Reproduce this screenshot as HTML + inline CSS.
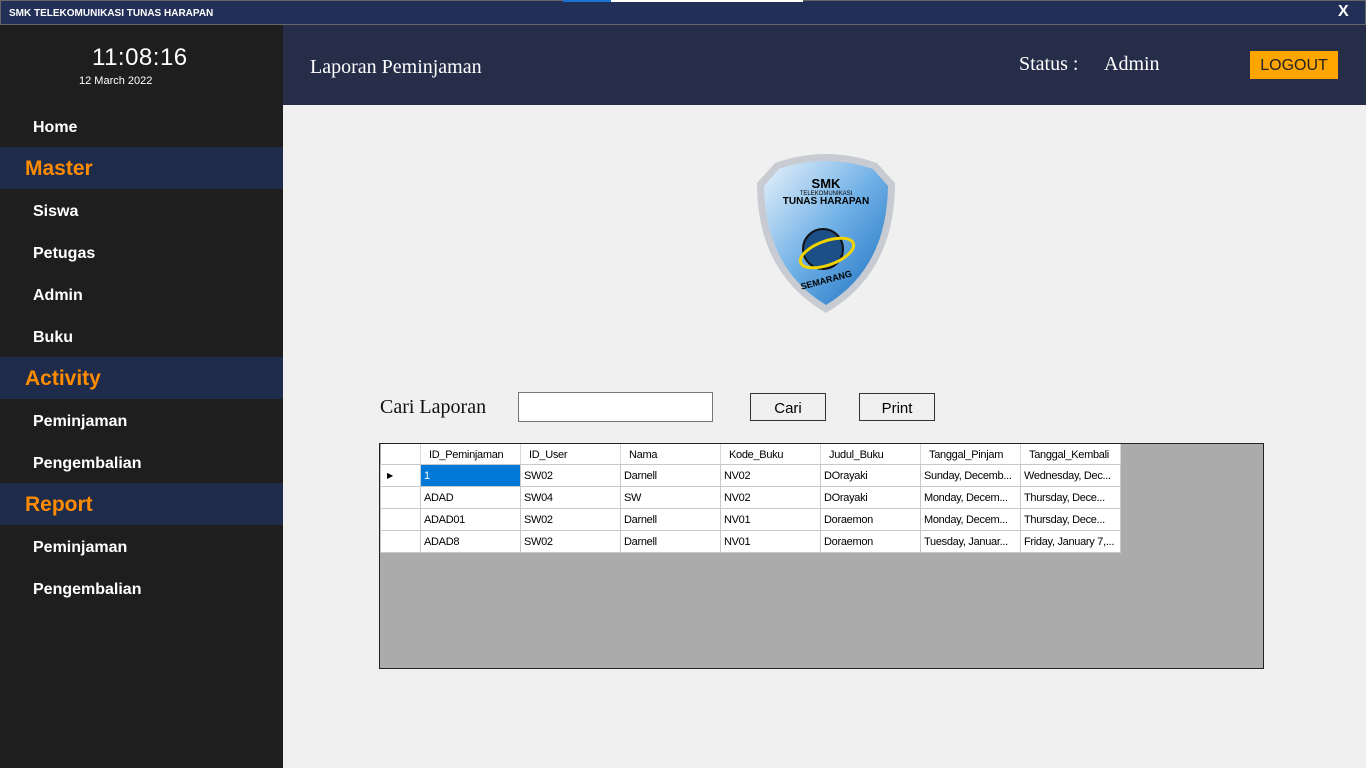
<!DOCTYPE html><html><head><style>
*{margin:0;padding:0;box-sizing:border-box}
body{width:1366px;height:768px;background:#f0f0f0;position:relative;overflow:hidden;font-family:"Liberation Sans",sans-serif}
.a{position:absolute}
#tb{left:0;top:0;width:1366px;height:25px;background:#223058;border:1px solid #666;color:#fff;font-size:10px;font-weight:bold;padding:7px 0 0 8px}
#sb{left:0;top:25px;width:283px;height:743px;background:#1e1e1e}
.it{position:absolute;left:33px;color:#fff;font-size:16px;font-weight:bold;margin-top:2px}
.bd{position:absolute;left:0;width:283px;height:42px;background:#1f2b4a;color:#ff8c00;font-size:21px;font-weight:bold;padding:10px 0 0 25px}
#hd{left:283px;top:25px;width:1083px;height:80px;background:#252d48;color:#fff;font-family:"Liberation Serif",serif}
table{border-collapse:collapse;font-size:11px;letter-spacing:-0.3px}
td{height:22px;border:1px solid #c8c8c8;background:#fff;padding:2px 3px 0;width:100px;white-space:nowrap;overflow:hidden}
th{height:20px;font-weight:normal;border-right:1px solid #d8d8d8;border-bottom:1px solid #c8c8c8;background:#fff;text-align:left;padding:2px 0 0 8px;width:100px}
.rh{width:40px;padding:0}
</style></head><body>
<div class="a" id="tb">SMK TELEKOMUNIKASI TUNAS HARAPAN</div>
<div class="a" style="left:563px;top:0;width:48px;height:2px;background:#1a73d0"></div>
<div class="a" style="left:611px;top:0;width:192px;height:2px;background:#fff"></div>
<div class="a" style="left:1338px;top:3px;color:#fff;font-size:16px;font-weight:bold">X</div>
<div class="a" id="sb">
<div class="a" style="left:92px;top:19px;color:#fff;font-size:24px;font-family:'Liberation Sans',sans-serif;letter-spacing:0.5px">11:08:16</div>
<div class="a" style="left:79px;top:50px;color:#fff;font-size:11px">12 March 2022</div>
<div class="it" style="top:92px">Home</div>
<div class="bd" style="top:122px">Master</div>
<div class="it" style="top:176px">Siswa</div>
<div class="it" style="top:218px">Petugas</div>
<div class="it" style="top:260px">Admin</div>
<div class="it" style="top:302px">Buku</div>
<div class="bd" style="top:332px">Activity</div>
<div class="it" style="top:386px">Peminjaman</div>
<div class="it" style="top:428px">Pengembalian</div>
<div class="bd" style="top:458px">Report</div>
<div class="it" style="top:512px">Peminjaman</div>
<div class="it" style="top:554px">Pengembalian</div>
</div>
<div class="a" id="hd">
<div class="a" style="left:27px;top:31px;font-size:20px">Laporan Peminjaman</div>
<div class="a" style="left:736px;top:28px;font-size:20px">Status :</div>
<div class="a" style="left:821px;top:28px;font-size:20px">Admin</div>
<div class="a" style="left:967px;top:26px;width:88px;height:28px;background:#ffa500;color:#222;font-family:'Liberation Sans',sans-serif;font-size:16px;text-align:center;line-height:30px">LOGOUT</div>
</div>
<svg class="a" style="left:755px;top:153px" width="142" height="162" viewBox="0 0 142 162">
<defs><linearGradient id="g" x1="0" y1="0" x2="1" y2="1"><stop offset="0" stop-color="#e8f2fb"/><stop offset=".5" stop-color="#6fb0e6"/><stop offset="1" stop-color="#1a6fc0"/></linearGradient></defs>
<path d="M20 10 Q71 -8 122 10 L140 30 Q140 120 71 160 Q2 120 2 30 Z" fill="#c8ccd2"/>
<path d="M24 16 Q71 0 118 16 L133 33 Q132 115 71 152 Q10 115 9 33 Z" fill="url(#g)"/>
<text x="71" y="35" font-size="13" font-weight="bold" text-anchor="middle" font-family="Liberation Sans">SMK</text>
<text x="71" y="42" font-size="6" text-anchor="middle" font-family="Liberation Sans">TELEKOMUNIKASI</text>
<text x="71" y="51" font-size="10" font-weight="bold" text-anchor="middle" font-family="Liberation Sans">TUNAS HARAPAN</text>
<circle cx="68" cy="96" r="20" fill="#1b4f86" stroke="#111" stroke-width="2"/>
<ellipse cx="72" cy="100" rx="28" ry="12" fill="none" stroke="#f1d400" stroke-width="3" transform="rotate(-20 72 100)"/>
<text x="72" y="130" font-size="9" font-weight="bold" text-anchor="middle" font-family="Liberation Sans" transform="rotate(-15 72 130)">SEMARANG</text>
</svg>
<div class="a" style="left:380px;top:396px;font-family:'Liberation Serif',serif;font-size:20px;color:#111">Cari Laporan</div>
<div class="a" style="left:518px;top:392px;width:195px;height:30px;background:#fff;border:1px solid #777"></div>
<div class="a" style="left:750px;top:393px;width:76px;height:28px;background:#f0f0f0;border:1px solid #333;font-size:15px;text-align:center;line-height:29px">Cari</div>
<div class="a" style="left:859px;top:393px;width:76px;height:28px;background:#f0f0f0;border:1px solid #333;font-size:15px;text-align:center;line-height:29px">Print</div>
<div class="a" style="left:379px;top:443px;width:885px;height:226px;background:#ababab;border:1px solid #222">
<table>
<tr><th class="rh"></th><th>ID_Peminjaman</th><th>ID_User</th><th>Nama</th><th>Kode_Buku</th><th>Judul_Buku</th><th>Tanggal_Pinjam</th><th>Tanggal_Kembali</th></tr>
<tr><td class="rh" style="padding-left:6px;font-size:8px">&#9654;</td><td style="background:#0078d7;color:#fff">1</td><td>SW02</td><td>Darnell</td><td>NV02</td><td>DOrayaki</td><td>Sunday, Decemb...</td><td>Wednesday, Dec...</td></tr>
<tr><td class="rh"></td><td>ADAD</td><td>SW04</td><td>SW</td><td>NV02</td><td>DOrayaki</td><td>Monday, Decem...</td><td>Thursday, Dece...</td></tr>
<tr><td class="rh"></td><td>ADAD01</td><td>SW02</td><td>Darnell</td><td>NV01</td><td>Doraemon</td><td>Monday, Decem...</td><td>Thursday, Dece...</td></tr>
<tr><td class="rh"></td><td>ADAD8</td><td>SW02</td><td>Darnell</td><td>NV01</td><td>Doraemon</td><td>Tuesday, Januar...</td><td>Friday, January 7,...</td></tr>
</table></div>
</body></html>
